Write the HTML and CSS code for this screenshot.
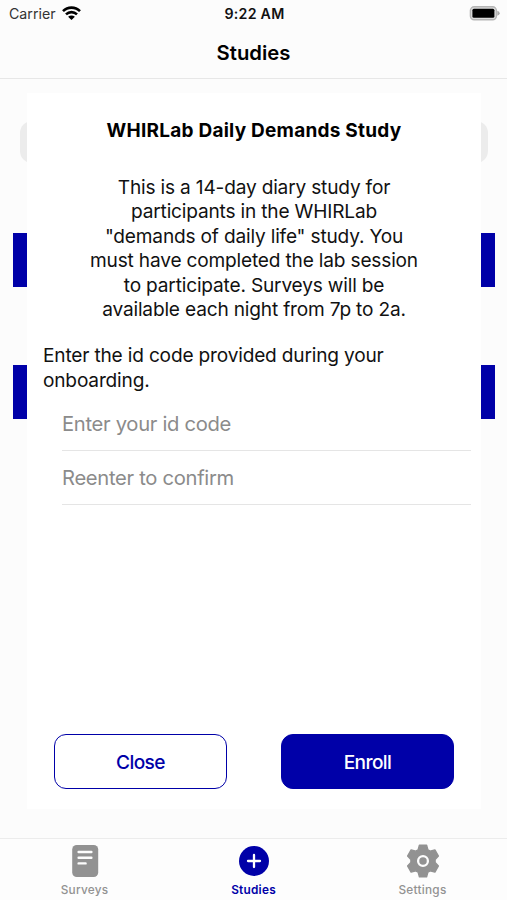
FILE: index.html
```html
<!DOCTYPE html>
<html lang="en">
<head>
<meta charset="utf-8">
<title>Studies</title>
<link rel="stylesheet" href="styles.css">
</head>
<body>
<div class="app">
  <div class="status">
    <div class="carrier"><span>Carrier</span>
      <svg class="wifi" width="19" height="14" viewBox="0 0 19 14"><path d="M1 5.2C5.8.4 13.2.4 18 5.2M4 8.4c3.1-3 7.9-3 11 0" fill="none" stroke="#000" stroke-width="2.6"/><path d="M9.5 13.9 6.1 10.8c1.9-1.7 4.9-1.7 6.8 0z"/></svg>
    </div>
    <span class="clock">9:22 AM</span>
    <svg class="battery" width="31" height="15" viewBox="0 0 31 15"><rect x="1.4" y=".8" width="26" height="13" rx="3.8" fill="#ddd" stroke="#b5b5b5" stroke-width="1.4"/><rect x="3.4" y="2.8" width="22" height="9" rx="1.5"/><path d="M28.3 4.8q2.4.8 2.4 2.5t-2.4 2.5z" fill="#aaa"/></svg>
  </div>
  <header class="header"><h1>Studies</h1></header>
  <main class="content">
    <div class="backdrop">
      <div class="search"></div>
      <div class="study"></div>
      <div class="study"></div>
    </div>
    <section class="dialog">
      <h2>WHIRLab Daily Demands Study</h2>
      <p class="about">This is a 14-day diary study for<br>participants in the WHIRLab<br>"demands of daily life" study. You<br>must have completed the lab session<br>to participate. Surveys will be<br>available each night from 7p to 2a.</p>
      <p class="prompt">Enter the id code provided during your<br>onboarding.</p>
      <div class="field">Enter your id code</div>
      <div class="field">Reenter to confirm</div>
      <div class="actions">
        <button class="btn close">Close</button>
        <button class="btn enroll">Enroll</button>
      </div>
    </section>
  </main>
  <nav class="tabs">
    <div class="tab"><svg width="34" height="34" viewBox="0 0 34 34"><rect x="4.2" y="1" width="26" height="32" rx="4.5" fill="#929292"/><path d="M10.6 8h12.8M10.6 13.7h12.8M10.6 19.4h7" stroke="#fdfdfd" stroke-width="2.4" stroke-linecap="round"/></svg><span>Surveys</span></div>
    <div class="tab active"><svg width="34" height="34" viewBox="0 0 34 34"><circle cx="17" cy="17" r="15" fill="#0000a8"/><path d="M17 11v12M11 17h12" stroke="#fff" stroke-width="2.3" stroke-linecap="round"/></svg><span>Studies</span></div>
    <div class="tab"><svg width="34" height="34" viewBox="0 0 34 34"><path d="M13.4 1.3h7.200l1.300 4.600 2.300 1.300 4.700-1.300 3.500 6.100-3.300 3.400v3.200l3.300 3.400-3.500 6.100-4.700-1.300-2.300 1.300-1.300 4.600h-7.200l-1.300-4.600-2.300-1.300-4.700 1.300-3.500-6.100 3.300-3.400v-3.200l-3.300-3.400 3.500-6.100 4.700 1.300 2.300-1.300z" fill="#929292" stroke="#929292" stroke-width="1.4" stroke-linejoin="round"/><circle cx="17" cy="17" r="4.9" fill="#929292" stroke="#fdfdfd" stroke-width="2.3"/></svg><span>Settings</span></div>
  </nav>
</div>
</body>
</html>
```
FILE: styles.css
```css
* { box-sizing: border-box; }
body { margin: 0; font-family: Inter, "Liberation Sans", sans-serif; color: #111; background: #fcfcfc; }
h1, h2, p { margin: 0; }
.app { width: 507px; height: 900px; display: flex; flex-direction: column; overflow: hidden; white-space: nowrap; }
.status { height: 27px; display: grid; grid-template-columns: 1fr auto 1fr; align-items: center; padding: 0 7px 0 9px; }
.carrier { display: flex; align-items: center; gap: 6px; font-size: 14.2px; color: #333; }
.wifi { margin-top: -2px; }
.clock { font-size: 14.2px; font-weight: 600; letter-spacing: 0.25px; }
.battery { justify-self: end; }
.header { height: 52px; border-bottom: 1px solid #e7e7e7; display: flex; align-items: center; justify-content: center; }
h1 { font-size: 20.3px; font-weight: 600; color: #000; }
.content { flex: 1; display: grid; min-height: 0; }
.backdrop, .dialog { grid-area: 1 / 1; }
.backdrop { padding: 42px 12px 0 13px; }
.search { height: 42px; margin: 0 7px; border-radius: 12px; background: #ececec; }
.study { height: 54px; margin-top: 70px; background: #0000a8; }
.study + .study { margin-top: 78px; }
.dialog { margin: 14px 26px 29px 27px; background: #fff; display: flex; flex-direction: column; z-index: 1; }
h2 { margin-top: 25px; font-size: 19px; line-height: 25px; font-weight: 700; letter-spacing: 0.24px; text-align: center; color: #000; }
.about { margin-top: 32px; font-size: 19.1px; line-height: 24.45px; letter-spacing: -0.18px; text-align: center; }
.prompt { margin: 21.3px 0 0 16px; font-size: 19.1px; line-height: 24.5px; letter-spacing: -0.18px; }
.field { height: 54px; margin: 0 10px 0 35px; border-bottom: 1px solid #e5e5e5; display: flex; align-items: center; font-size: 20.2px; letter-spacing: -0.3px; color: #8b8b8b; }
.prompt + .field { margin-top: 5px; }
.actions { margin: auto 27px 20px; display: flex; justify-content: space-between; }
.btn { width: 173px; height: 55px; border: 1.5px solid #0000a8; border-radius: 12px; padding: 0; font: 500 19.1px Inter, sans-serif; letter-spacing: -0.6px; }
.close { background: #fff; color: #0000a8; }
.enroll { background: #0000a8; color: #fff; }
.tabs { height: 62px; border-top: 1px solid #ececec; background: #fdfdfd; display: grid; grid-template-columns: repeat(3, 1fr); }
.tab { display: flex; flex-direction: column; align-items: center; padding-top: 5px; font-size: 11.8px; font-weight: 500; line-height: 15px; letter-spacing: 0.25px; color: #929292; }
.tab span { margin-top: 5px; }
.active { color: #0000a8; font-weight: 600; }
```
